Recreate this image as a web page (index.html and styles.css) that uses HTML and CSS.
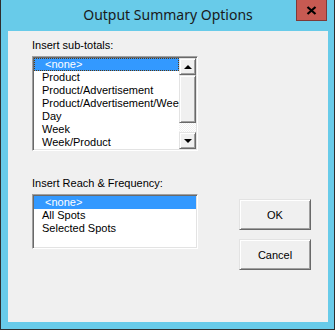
FILE: index.html
```html
<!DOCTYPE html>
<html lang="en">
<head>
    <meta charset="UTF-8">
    <title>Output Summary Options</title>
    <link rel="stylesheet" href="styles.css">
</head>
<body>
    <div class="window">
        <div class="titlebar">
            <span class="title">Output Summary Options</span>
            <button class="close" title="Close">
                <svg width="11" height="9" viewBox="0 0 11 9"><path d="M1.5 1 L9.5 8 M9.5 1 L1.5 8" stroke="#000" stroke-width="2.2"/></svg>
            </button>
        </div>
        <div class="client">
            <div class="fields">
                <label class="field-label">Insert sub-totals:</label>
                <div class="listbox tall">
                    <ul class="items">
                        <li class="selected focused">&nbsp;&lt;none&gt;</li>
                        <li>Product</li>
                        <li>Product/Advertisement</li>
                        <li>Product/Advertisement/Week</li>
                        <li>Day</li>
                        <li>Week</li>
                        <li>Week/Product</li>
                    </ul>
                    <div class="scrollbar">
                        <div class="sb-btn up"></div>
                        <div class="sb-thumb"></div>
                        <div class="sb-track"></div>
                        <div class="sb-btn down"></div>
                    </div>
                </div>

                <label class="field-label second">Insert Reach &amp; Frequency:</label>
                <div class="listbox short">
                    <ul class="items">
                        <li class="selected">&nbsp;&lt;none&gt;</li>
                        <li>All Spots</li>
                        <li>Selected Spots</li>
                    </ul>
                </div>
            </div>
            <div class="actions">
                <button class="btn">OK</button>
                <button class="btn">Cancel</button>
            </div>
        </div>
    </div>
</body>
</html>
```

FILE: styles.css
```css
body {
    margin: 0;
    font-family: "Liberation Sans", Arial, sans-serif;
    font-size: 11px;
    color: #000;
}
.window {
    width: 335px;
    height: 330px;
    box-sizing: border-box;
    background: #68cbe9;
    border: 1px solid #2e2e2e;
    border-top: none;
    padding: 0 6px 6px 7px;
}
.titlebar {
    height: 31px;
    display: grid;
    grid-template-columns: 1fr auto 1fr;
}
.title {
    grid-column: 2;
    font-family: "Noto Sans", sans-serif;
    font-size: 14px;
    color: #1a1a1a;
    padding-top: 5px;
}
.close {
    grid-column: 3;
    justify-self: end;
    align-self: start;
    width: 31px;
    height: 21px;
    margin-right: 1px;
    padding: 0;
    border: 1px solid #7e3a38;
    border-top: none;
    background: #c75a52;
    display: flex;
    align-items: center;
    justify-content: center;
}
.client {
    height: 291px;
    background: #f0f0f0;
    display: flex;
}
.fields {
    display: flex;
    flex-direction: column;
    padding: 8px 0 0 24px;
    width: 166px;
}
.field-label {
    line-height: 13px;
    height: 13px;
    margin-bottom: 4px;
}
.field-label.second {
    margin-top: 26px;
}
.listbox {
    display: flex;
    background: #fff;
    border: 1px solid;
    border-color: #a0a0a0 #fff #fff #a0a0a0;
    box-shadow: inset 1px 1px 0 #696969, inset -1px -1px 0 #e3e3e3;
    padding: 1px;
    overflow: hidden;
}
.listbox.tall {
    height: 91px;
}
.listbox.short {
    height: 51px;
}
.items {
    list-style: none;
    margin: 0;
    padding: 0;
    flex: 1;
    overflow: hidden;
}
.items li {
    height: 13px;
    line-height: 13px;
    padding-left: 8px;
    white-space: nowrap;
    overflow: hidden;
}
.items li.selected {
    background: #3399ff;
    color: #fff;
}
.items li.focused {
    outline: 1px dotted #5a3a10;
    outline-offset: -1px;
}
.scrollbar {
    width: 17px;
    display: flex;
    flex-direction: column;
}
.sb-btn,
.sb-thumb {
    box-sizing: border-box;
    background: #f0f0f0;
    border: 1px solid;
    border-color: #e3e3e3 #696969 #696969 #e3e3e3;
    box-shadow: inset 1px 1px 0 #fff, inset -1px -1px 0 #a0a0a0;
}
.sb-btn {
    height: 17px;
    display: flex;
    align-items: center;
    justify-content: center;
}
.sb-btn::after {
    content: "";
    border-left: 4px solid transparent;
    border-right: 4px solid transparent;
}
.sb-btn.up::after {
    border-bottom: 4px solid #000;
}
.sb-btn.down::after {
    border-top: 4px solid #000;
}
.sb-thumb {
    height: 48px;
}
.sb-track {
    flex: 1;
    background-image: conic-gradient(#fff 25%, #f0f0f0 0 50%, #fff 0 75%, #f0f0f0 0);
    background-size: 2px 2px;
}
.actions {
    display: flex;
    flex-direction: column;
    gap: 9px;
    margin: 168px 0 0 41px;
}
.btn {
    width: 72px;
    height: 31px;
    font-family: "Liberation Sans", Arial, sans-serif;
    font-size: 11px;
    color: #000;
    background: #f0f0f0;
    border: 1px solid;
    border-color: #e3e3e3 #696969 #696969 #e3e3e3;
    box-shadow: inset 1px 1px 0 #fff, inset -1px -1px 0 #a0a0a0;
    padding: 0;
}
```
